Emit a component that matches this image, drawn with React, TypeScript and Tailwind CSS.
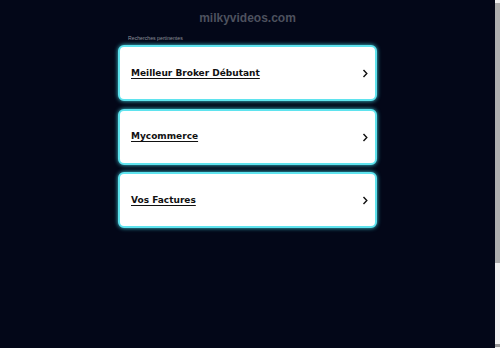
import React from "react"

const links = ["Meilleur Broker Débutant", "Mycommerce", "Vos Factures"]

const Chevron = () => (
  <svg width="6" height="9" viewBox="0 0 6 9" fill="none">
    <polyline points="1.5,1 4.8,4.5 1.5,8" stroke="#111" strokeWidth="1.4" />
  </svg>
)

export default function App() {
  return (
    <div className="flex h-[348px] w-[500px] overflow-hidden bg-[#030718]">
      <main className="flex flex-1 flex-col items-center pt-[11px]">
        <h1 className="font-['Liberation_Sans',Arial,sans-serif] text-[12px] font-bold leading-[15px] text-[#4d515e]">
          milkyvideos.com
        </h1>

        <section className="mt-[9px] w-[259px]">
          <p className="pl-[10px] font-['Liberation_Sans',Arial,sans-serif] text-[5.2px] leading-[6px] text-[#8b8f99]">
            Recherches pertinentes
          </p>

          <div className="mt-[4px] flex flex-col gap-[7.5px]">
            {links.map((item) => (
              <a
                key={item}
                className="flex h-[56px] items-center justify-between rounded-[6px] border-2 border-[#5fe3ee] bg-white pb-[-1px] pl-[11px] pr-[7px] pt-[1px] shadow-[0_0_4px_#3fc9d8]"
              >
                <span className="font-['DejaVu_Sans',Verdana,sans-serif] text-[9px] font-bold text-[#111] underline underline-offset-[2px]">
                  {item}
                </span>
                <Chevron />
              </a>
            ))}
          </div>
        </section>
      </main>

      <aside className="flex w-[5px] flex-col bg-[#f1f1f1]">
        <div className="h-[3px]" />
        <div className="h-[260px] bg-[#b0b0b0]" />
        <div className="flex-1" />
        <div className="mb-[1px] h-[3px] bg-[#9a9a9a]" />
      </aside>
    </div>
  )
}
